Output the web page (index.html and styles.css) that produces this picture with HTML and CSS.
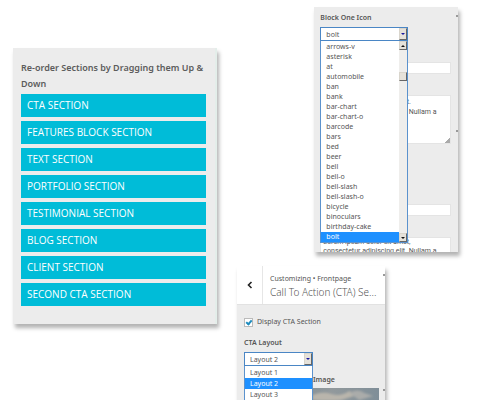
FILE: index.html
```html
<!DOCTYPE html>
<html lang="en">
<head>
<meta charset="utf-8">
<title>Theme Customizer</title>
<link rel="stylesheet" href="styles.css">
</head>
<body>
<main class="page">
  <section class="panel order">
    <h2 class="order-title">Re-order Sections by Dragging them Up &amp; Down</h2>
    <ul class="order-list">
      <li>CTA SECTION</li>
      <li>FEATURES BLOCK SECTION</li>
      <li>TEXT SECTION</li>
      <li>PORTFOLIO SECTION</li>
      <li>TESTIMONIAL SECTION</li>
      <li>BLOG SECTION</li>
      <li>CLIENT SECTION</li>
      <li>SECOND CTA SECTION</li>
    </ul>
  </section>
  <div class="side">
    <section class="panel block">
      <label class="label" for="icon">Block One Icon</label>
      <div class="picker picker-icon">
        <select id="icon" class="select"><option>bolt</option></select>
        <span class="btn drop"></span>
        <div class="menu">
          <ul class="options">
            <li>arrows-v</li><li>asterisk</li><li>at</li><li>automobile</li><li>ban</li>
            <li>bank</li><li>bar-chart</li><li>bar-chart-o</li><li>barcode</li><li>bars</li>
            <li>bed</li><li>beer</li><li>bell</li><li>bell-o</li><li>bell-slash</li>
            <li>bell-slash-o</li><li>bicycle</li><li>binoculars</li><li>birthday-cake</li><li class="on">bolt</li>
          </ul>
          <div class="scroll"><span class="btn up"></span><span class="btn thumb"></span><span class="btn end"></span></div>
        </div>
      </div>
      <input class="field" type="text" aria-label="Block one title">
      <textarea class="area" aria-label="Block one text">Lorem ipsum dolor sit amet.
consectetur adipiscing elit. Nullam a</textarea>
      <input class="field" type="text" aria-label="Block two title">
      <textarea class="area area-two" aria-label="Block two text">Lorem ipsum dolor sit amet,
consectetur adipiscing elit. Nullam a</textarea>
      <span class="rail"></span>
    </section>
    <section class="panel cta">
      <header class="cta-head">
        <button class="back" type="button" aria-label="Back">
          <svg width="6" height="8" viewBox="0 0 6 8"><path d="M4.5 1 1.5 4l3 3" fill="none" stroke="#222" stroke-width="1.6"/></svg>
        </button>
        <div class="cta-titles">
          <p class="crumb">Customizing • Frontpage</p>
          <h2 class="cta-title">Call To Action (CTA) Se...</h2>
        </div>
      </header>
      <div class="cta-body">
        <label class="check"><input type="checkbox" checked><span>Display CTA Section</span></label>
        <label class="label" for="layout">CTA Layout</label>
        <div class="picker picker-layout">
          <select id="layout" class="select"><option>Layout 2</option></select>
          <span class="btn drop"></span>
          <div class="menu">
            <ul class="options"><li>Layout 1</li><li class="on">Layout 2</li><li>Layout 3</li></ul>
          </div>
        </div>
        <p class="label image-label">Image</p>
        <svg class="photo" viewBox="0 0 136 30" preserveAspectRatio="none" aria-hidden="true">
          <defs>
            <linearGradient id="sky" x1="0" x2="1"><stop offset="0" stop-color="#71828e"/><stop offset=".65" stop-color="#92999c"/><stop offset="1" stop-color="#7f8e98"/></linearGradient>
            <filter id="soft"><feGaussianBlur stdDeviation="1.2"/></filter>
          </defs>
          <path fill="url(#sky)" d="M0 0h136v30H0z"/>
          <g filter="url(#soft)" fill="#b9b5ac"><path d="M69 7q10-4 19-1t18-3l8 4-16 5q-12 1-29 0z"/><path d="M106 5q9-5 15 0l9 3-14 4z" fill="#aaacaa"/></g>
        </svg>
      </div>
      <span class="rail"></span>
    </section>
  </div>
</main>
</body>
</html>
```
FILE: styles.css
```css
* { box-sizing: border-box; }
body { margin: 0; background: #fff; color: #555; font-family: "Noto Sans", "Open Sans", sans-serif; }
h2, p, ul { margin: 0; padding: 0; }
ul { list-style: none; }

.page {
  display: grid;
  grid-template-columns: 204fr 221fr;
  gap: 20px;
  align-items: start;
  height: 100vh;
  padding: 0 42px 0 13px;
  overflow: hidden;
}
.panel { position: relative; background: #ececec; box-shadow: 2px 4px 4px rgba(0, 0, 0, .3); }

.order { margin-top: 48px; padding: 12px 9px 18px 8px; border-right: 2px solid #e4eeea; }
.order-title { font-size: 9px; font-weight: 600; line-height: 16px; margin-bottom: 2px; color: #5c5c5c; }
.order-list { display: grid; gap: 4px; }
.order-list li {
  height: 23px;
  padding-left: 6px;
  background: #00bcd8;
  color: #fff;
  font-family: "Open Sans", "Noto Sans", sans-serif;
  font-size: 10px;
  font-weight: 500;
  line-height: 23px;
}

.side { display: flex; flex-direction: column; gap: 14px; padding-top: 7px; }
.label { display: block; font-size: 7px; font-weight: 600; line-height: 10px; color: #555; }

.block { width: 65%; height: 245px; align-self: flex-end; padding: 6px 7px 0 6px; overflow: hidden; }
.block .label { margin-bottom: 4px; }

.picker { position: relative; z-index: 2; height: 14px; }
.picker-icon { width: 88px; margin-bottom: 21px; }
.picker-layout { width: 69px; }
.select {
  display: block;
  width: 100%;
  height: 14px;
  padding: 1px 5px 0;
  appearance: none;
  border: 1px solid #4a86c5;
  border-radius: 0;
  background: #fff;
  color: #555;
  font: 7px/11px "Noto Sans", sans-serif;
}
.btn {
  display: block;
  width: 8px;
  height: 9px;
  border: 1px solid #d9d5cc;
  border-right-color: #666;
  border-bottom-color: #666;
  background: #e6e2da;
}
.drop, .up, .end { display: flex; align-items: center; justify-content: center; }
.drop::after, .up::after, .end::after { content: ""; border: 2px solid transparent; border-top: 2px solid #111; border-bottom: 0; }
.up::after { border-top: 0; border-bottom: 2px solid #111; }
.drop { position: absolute; top: 1px; right: 1px; height: 12px; }
.drop::after { border-top-color: #1818a0; }
.menu { position: absolute; top: 14px; left: 0; right: 0; display: flex; border: 1px solid #5b92cd; border-top: 0; background: #fff; }
.options { flex: 1; padding-top: 1px; }
.options li { height: 10px; padding-left: 5px; font-size: 7px; line-height: 10px; color: #555; white-space: nowrap; }
.picker-layout .options li { height: 11px; line-height: 11px; }
.options .on, .picker-layout .options .on { background: #1e90ff; color: #fff; }
.scroll { display: flex; flex-direction: column; width: 8px; background: #efeeec; }
.thumb { margin-top: 22px; }
.end { margin-top: auto; }

.field, .area { display: block; width: 100%; border: 1px solid #e4e4e4; background: #fff; }
.field { height: 12px; margin-bottom: 21px; }
.area {
  height: 49px;
  margin-bottom: 60px;
  padding: 1px 2px;
  resize: vertical;
  overflow: hidden;
  color: #555;
  font: 7px/10px Roboto, sans-serif;
  white-space: pre;
}
.area::-webkit-resizer { background: linear-gradient(135deg, transparent 80%, #aaa 80%); }
.area-two { margin-bottom: 0; padding-top: 0; line-height: 9px; }
.rail { position: absolute; top: 8px; right: 0; width: 2px; height: 117px; border-top: 2px solid #999; border-bottom: 2px solid #999; }

.cta { width: 67%; }
.cta-head { display: flex; height: 39px; background: #fff; border-bottom: 1px solid #e2e2e2; }
.back { display: flex; align-items: center; justify-content: center; width: 26px; padding: 0; border: 0; border-right: 1px solid #e6e6e6; background: #fff; }
.cta-titles { padding: 8px 0 0 7px; white-space: nowrap; }
.crumb { font-size: 7px; line-height: 10px; }
.cta-title { font-size: 10px; font-weight: 300; line-height: 17px; color: #555; }
.cta-body { padding: 12px 6px 0 7px; }
.check { display: flex; align-items: center; gap: 4px; height: 10px; margin-bottom: 11px; font-size: 7px; line-height: 10px; }
.check input { display: flex; align-items: center; justify-content: center; width: 9px; height: 9px; margin: 0; appearance: none; border: 1px solid #bbb; background: #fff; }
.check input::after { content: ""; box-sizing: border-box; width: 4px; height: 6px; border: solid #1e8cbe; border-width: 0 2px 2px 0; transform: rotate(40deg); }
.cta .label { margin-bottom: 4px; }
.cta .image-label { margin: 9px 0 3px 69px; }
.photo { display: block; width: 100%; height: 30px; }
```
